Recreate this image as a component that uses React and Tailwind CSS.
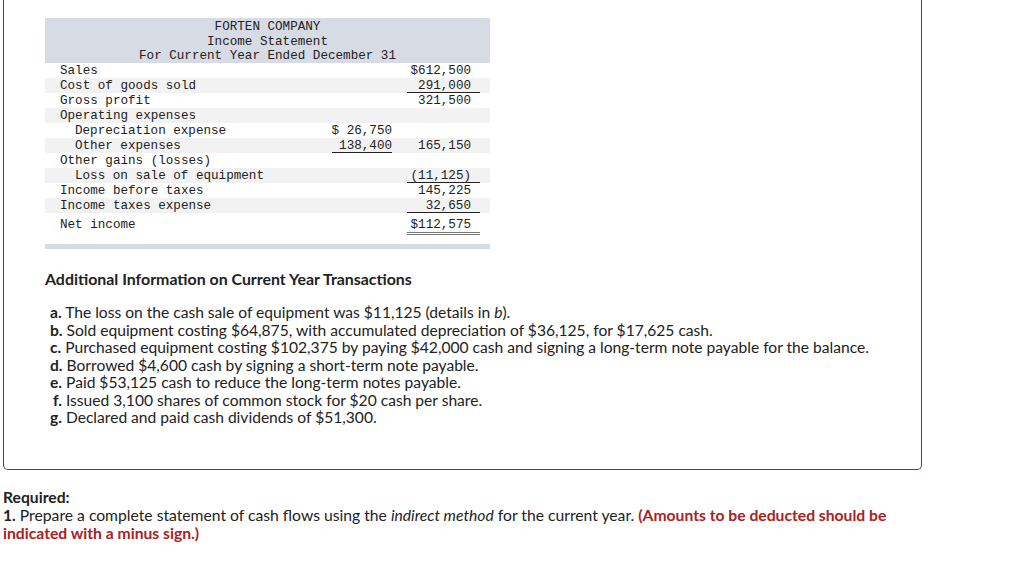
import React from "react";

const rows = [
  { label: "Sales", indent: 0, c2: "$612,500" },
  { label: "Cost of goods sold", indent: 0, c2: "291,000", line2: true },
  { label: "Gross profit", indent: 0, c2: "321,500" },
  { label: "Operating expenses", indent: 0 },
  { label: "Depreciation expense", indent: 1, c1: "$ 26,750" },
  { label: "Other expenses", indent: 1, c1: " 138,400", line1: true, c2: "165,150" },
  { label: "Other gains (losses)", indent: 0 },
  { label: "Loss on sale of equipment", indent: 1, c2: "(11,125)", line2: true },
  { label: "Income before taxes", indent: 0, c2: "145,225" },
  { label: "Income taxes expense", indent: 0, c2: "32,650", line2: true },
];

const items = [
  ["a.", <>The loss on the cash sale of equipment was $11,125 (details in <i>b</i>).</>],
  ["b.", "Sold equipment costing $64,875, with accumulated depreciation of $36,125, for $17,625 cash."],
  ["c.", "Purchased equipment costing $102,375 by paying $42,000 cash and signing a long-term note payable for the balance."],
  ["d.", "Borrowed $4,600 cash by signing a short-term note payable."],
  ["e.", "Paid $53,125 cash to reduce the long-term notes payable."],
  ["f.", "Issued 3,100 shares of common stock for $20 cash per share."],
  ["g.", "Declared and paid cash dividends of $51,300."],
];

export default function App() {
  return (
    <div className="min-h-screen bg-white text-[#222]">
      <div className="ml-[3px] w-[919px] h-[470px] border border-t-0 border-[#2f4b7c] rounded-b-[5px] pl-[41px] pt-[18px]">
        <div className="w-[445px] font-['Liberation_Mono',monospace] text-[12.6px] whitespace-pre">
          <div className="bg-[#d6dbe4] text-center pt-[2px] pb-0 leading-[15px] h-[45px]">
            <div>FORTEN COMPANY</div>
            <div>Income Statement</div>
            <div className="leading-[13px]">For Current Year Ended December 31</div>
          </div>
          {rows.map((r, i) => (
            <div key={i} className={`flex h-[15px] leading-[13px] ${i % 2 === 1 ? "bg-[#f2f2f2]" : "bg-white"}`}>
              <div className={`flex-1 pt-[2px] ${r.indent ? "pl-[30px]" : "pl-[15px]"}`}>{r.label}</div>
              <div className="w-[80px] text-right">
                {r.c1 && (
                  <span className={`inline-block h-[15px] pt-[2px] ${r.line1 ? "border-b border-[#222]" : ""}`}>{r.c1}</span>
                )}
              </div>
              <div className={`ml-[15px] w-[73px] h-[15px] pt-[2px] pr-[9px] text-right ${r.line2 ? "border-b border-[#222]" : ""}`}>
                {r.c2}
              </div>
              <div className="w-[10px]" />
            </div>
          ))}
          <div className="flex pt-[6px] leading-[13px]">
            <div className="flex-1 pl-[15px]">Net income</div>
            <div className="ml-[15px] w-[73px] pr-[9px] text-right border-b-[3px] border-double border-[#777]">$112,575</div>
            <div className="w-[10px]" />
          </div>
          <div className="h-[9px]" />
          <div className="h-[5px] bg-[#d6dbe4]" />
        </div>

        <div className="mt-[21px] font-['Lato',sans-serif] font-bold text-[15.9px] leading-[18px] text-[#222]">
          Additional Information on Current Year Transactions
        </div>
        <div className="mt-[16px] pl-[5px] font-['Lato',sans-serif] text-[15.6px] leading-[17.5px] text-[#222]">
          {items.map(([k, t]) => (
            <div key={k} className="whitespace-nowrap">
              <span className={`font-bold ${k === "f." ? "pl-[3px]" : ""}`}>{k}</span> {t}
            </div>
          ))}
        </div>
      </div>

      <div className="pl-[3px] pt-[18px] max-w-[900px] font-['Lato',sans-serif] text-[15.7px] leading-[18px] text-[#222]">
        <div className="font-bold">Required:</div>
        <div>
          <span className="font-bold">1.</span> Prepare a complete statement of cash flows using the <i>indirect method</i> for the current year.{" "}
          <span className="font-bold text-[#a82222]">(Amounts to be deducted should be indicated with a minus sign.)</span>
        </div>
      </div>
    </div>
  );
}
